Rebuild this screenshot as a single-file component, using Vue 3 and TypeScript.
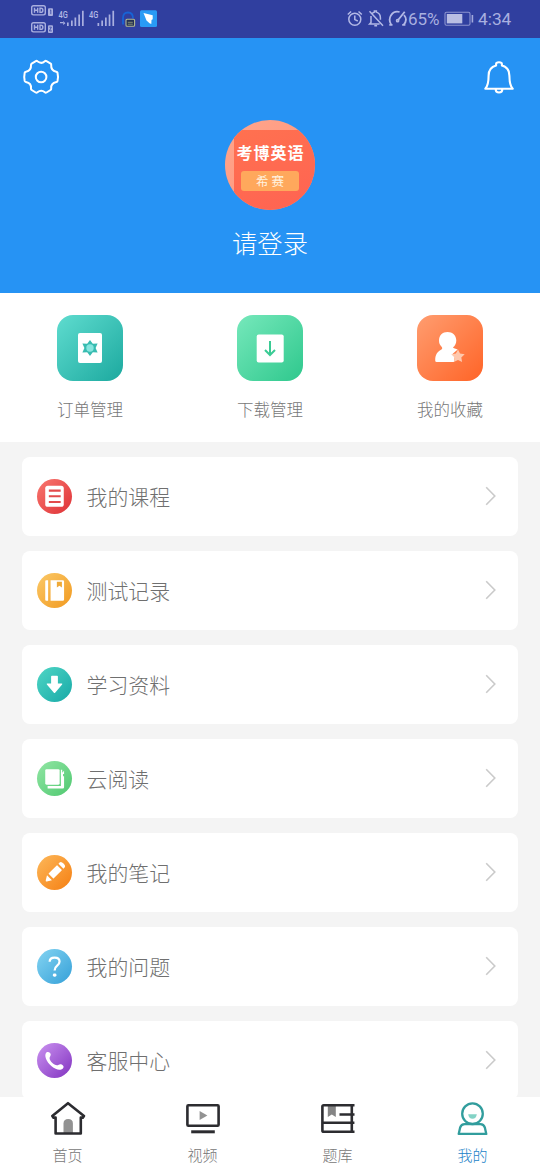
<script setup lang="ts">
type Shortcut = { id: string; label: string; from: string; to: string }
type Row = { id: string; label: string; from: string; to: string }
type Tab = { id: string; label: string; active?: boolean }

const shortcuts: Shortcut[] = [
  { id: 'order', label: '订单管理', from: '#5fdccf', to: '#1ca99f' },
  { id: 'download', label: '下载管理', from: '#76e8bb', to: '#2fc88d' },
  { id: 'favorite', label: '我的收藏', from: '#ff9d70', to: '#ff6427' },
]

const rows: Row[] = [
  { id: 'course', label: '我的课程', from: '#f9776f', to: '#de3136' },
  { id: 'test', label: '测试记录', from: '#fbc968', to: '#f1991f' },
  { id: 'material', label: '学习资料', from: '#4fd6c5', to: '#17a9a7' },
  { id: 'reading', label: '云阅读', from: '#92e6a4', to: '#4fc870' },
  { id: 'note', label: '我的笔记', from: '#fdb85a', to: '#f57f12' },
  { id: 'question', label: '我的问题', from: '#84d4f2', to: '#35a0d8' },
  { id: 'service', label: '客服中心', from: '#cb93f0', to: '#8132c0' },
]

const tabs: Tab[] = [
  { id: 'home', label: '首页' },
  { id: 'video', label: '视频' },
  { id: 'bank', label: '题库' },
  { id: 'mine', label: '我的', active: true },
]
</script>

<template>
  <div class="app">
    <div class="status">
      <svg class="status-left" width="130" height="37" viewBox="30 0 130 37" fill="none">
        <g stroke="#a9afdf" stroke-width="1.4">
          <rect x="31.7" y="5.7" width="13.6" height="9.2" rx="1.8" />
          <rect x="31.7" y="22.7" width="13.6" height="9.2" rx="1.8" />
          <path d="M34.5 7.8v5M37.7 7.8v5M34.5 10.3h3.2M40 8.2h1q1.9 0 1.9 2.1t-1.9 2.1h-1zM34.5 24.8v5M37.7 24.8v5M34.5 27.3h3.2M40 25.2h1q1.9 0 1.9 2.1t-1.9 2.1h-1z" />
        </g>
        <g fill="#a9afdf">
          <rect x="48" y="8.3" width="5" height="7.7" rx="1" />
          <rect x="48" y="25.3" width="5" height="7.7" rx="1" />
          <path d="M67 22.5h1.7V26H67zM71 20.5h1.7V26H71zM74.5 17.5h1.7V26h-1.7zM78.3 14.5H80V26h-1.7zM82 10.8h1.7V26H82zM97.5 23h1.7v3h-1.7zM101.3 20.5h1.7V26h-1.7zM105 17.5h1.7V26H105zM108.7 14.5h1.7V26h-1.7zM112.4 10.8h1.7V26h-1.7zM63.2 21v4l2.2-1.8zM60 22h3v1.2h-3z" />
        </g>
        <path d="M50 10.5l.8-.6v4.2M49.4 27.2h2l-2 3.7h2.4" stroke="#303f9f" stroke-width=".8" />
        <path d="M123 24.5v-6.3q0-5.7 5-5.7t5 5.7" stroke="#1763d6" stroke-width="1.8" />
        <rect x="126" y="19.3" width="8.6" height="7" rx="1" fill="#243052" stroke="#b4ba91" stroke-width="1.1" />
        <path d="M127.8 22.3h5M127.8 24.2h5" stroke="#9ca47b" stroke-width=".8" />
        <rect x="140" y="10.3" width="17" height="16.7" rx="1.5" fill="#299bf5" />
        <path d="M143.5 13l9.2 2.3v4l-1.2.8-.2 4-1.8-.9-3-2.6z" fill="#fff" />
        <text x="58.5" y="18" textLength="9.3" lengthAdjust="spacingAndGlyphs" class="net">4G</text>
        <text x="89" y="18" textLength="9.3" lengthAdjust="spacingAndGlyphs" class="net">4G</text>
      </svg>
      <div class="status-right">
        <svg width="62" height="24" viewBox="346 7 62 24" fill="none" stroke="#b3b9e6" stroke-width="1.5">
          <circle cx="354.8" cy="19.3" r="6" />
          <path d="M354.8 15.5v4.1l3 1.4M347.8 14.5l3.3-3M358.5 11.5l3.3 3" />
          <path d="M372.2 13.5q1-1 2.2-1.4v-1h2v1q4 1.2 4 5.6v2M371 16v6.5l-1.4 1.5h10M369.5 11.2l13.5 14.6M374.3 25.7h2.8" />
          <path d="M391.2 24.7q-3-4.6-.3-9.3 3.2-5 8.7-3.4M404 15q4.2 5-.6 10M389.3 24.9h3.2M402.2 24.9h3.2M397.7 20.5l7-8.8" stroke-width="1.8" />
          <circle cx="397.6" cy="20.7" r="1.1" />
        </svg>
        <span class="pct">65%</span>
        <svg class="battery" width="30" height="16" viewBox="0 0 30 16">
          <rect x="1" y="1.2" width="25" height="13" rx="1.5" fill="none" stroke="#8c94d0" stroke-width="1.1" />
          <rect x="2.8" y="3" width="15.5" height="9.4" fill="#b9bee3" />
          <rect x="27.6" y="4" width="1.6" height="7.5" fill="#a2a9dc" />
        </svg>
        <span class="clock">4:34</span>
      </div>
    </div>

    <header class="hero">
      <svg class="gear" width="38" height="38" viewBox="0 0 38 38" fill="none" stroke="#fff" stroke-width="2" stroke-linejoin="round">
        <path d="M13.8 3.1q.9-.5 1.6.2 4 3.1 7.4 0 .8-.7 1.7-.2l4.2 2.5q.7.5.5 1.4-.4 5.6 5 6.7 1 .2 1.3 1 1 3.7 0 8.3-.2.8-1.1 1-5.8 1.3-5.2 6.5.1 1-.7 1.5l-4 2.5q-.9.5-1.6-.2-3.7-3.1-7.5 0-.8.7-1.7.2l-4-2.5q-.8-.5-.7-1.5.6-5.3-5.1-6.5-.9-.2-1.2-1-.9-4.6 0-8.3.3-.8 1.3-1 5.4-1.1 5-6.7 0-.9.7-1.4z" />
        <circle cx="19.1" cy="19" r="5.3" />
      </svg>
      <svg class="bell" width="32" height="36" viewBox="0 0 32 36" fill="none" stroke="#fff" stroke-width="2.1" stroke-linejoin="round">
        <path d="M2.3 28.7q3.3-3.5 3.3-13 0-8.3 7.5-10.2V4q0-1.8 2.9-1.8T18.9 4v1.5q7.5 1.9 7.5 10.2 0 9.5 3.3 13zM12.7 29.5q0 3 3.3 3t3.3-3" />
      </svg>
      <div class="avatar">
        <div class="cover">
          <span class="cover-title">考博英语</span>
          <span class="cover-tag">希赛</span>
        </div>
      </div>
      <div class="login">请登录</div>
    </header>

    <section class="shortcuts">
      <div v-for="s in shortcuts" :key="s.id" class="shortcut">
        <div class="tile" :style="{ background: `linear-gradient(135deg, ${s.from}, ${s.to})` }">
          <svg width="66" height="66" viewBox="0 0 66 66">
            <g v-if="s.id === 'order'">
              <rect x="21" y="18" width="24" height="30" rx="2" fill="#fff" />
              <path d="M33 25l2.8 3.8 4.8-.3-2 4.5 2 4.5-4.8-.3L33 41l-2.8-3.8-4.8.3 2-4.5-2-4.5 4.8.3z" fill="#38bcb1" />
              <circle cx="33" cy="33" r="3.7" fill="#87e6df" />
            </g>
            <g v-else-if="s.id === 'download'">
              <rect x="19.7" y="19.5" width="27" height="28" rx="2" fill="#fff" />
              <path d="M33 26v13.5M28 35l5 5 5-5" fill="none" stroke="#3acb94" stroke-width="2" />
            </g>
            <g v-else>
              <path d="M30.5 17c5 0 8.8 3.5 8.8 8.4 0 3.2-1.5 5.4-3.2 6.9 0 1.4 3 1.4 4.6 2.2l-5 4.3 2 3.1-.8 5H19.7q-1.5 0-1.5-1.5c0-7 3-9.3 6.2-11 1-.7 1.2-1.5 0-3-1.5-1.5-2.4-3.2-2.4-6 0-4.9 3.5-8.4 8.5-8.4z" fill="#fff" />
              <path d="M41 34.5l2 4 4.7.7-3.4 3.2.8 4.7-4.1-2.2-4.2 2.2.8-4.7-3.4-3.2 4.7-.7z" fill="#ffc8ad" />
            </g>
          </svg>
        </div>
        <span class="shortcut-label">{{ s.label }}</span>
      </div>
    </section>

    <main class="list">
      <div v-for="r in rows" :key="r.id" class="row">
        <div class="badge" :style="{ background: `linear-gradient(135deg, ${r.from}, ${r.to})` }">
          <svg width="35" height="35" viewBox="0 0 34 34">
            <g v-if="r.id === 'course'">
              <rect x="8" y="6.5" width="18" height="20.5" rx="2.5" fill="#fff" />
              <path d="M11.5 11.3h11.5M11.5 16.8h11.5M11.5 22.3h11.5" stroke="#e34b4c" stroke-width="2" />
            </g>
            <g v-else-if="r.id === 'test'">
              <path d="M9 7h1.8v20H9q-1 0-1-1V8q0-1 1-1zM13.2 7H25q1.3 0 1.3 1.3v17.4q0 1.3-1.3 1.3H13.2z" fill="#fff" />
              <path d="M19.3 8.5h4.9v5.7l-2.4-1.7-2.5 1.7z" fill="#efaa38" />
            </g>
            <path v-else-if="r.id === 'material'" d="M13.7 9.3q0-.8.8-.8h5q.8 0 .8.8V16H24q1 0 .4.9l-6.8 8q-.6.6-1.2 0l-6.8-8q-.6-.9.4-.9h3.7z" fill="#fff" />
            <g v-else-if="r.id === 'reading'">
              <rect x="8" y="8" width="14" height="15" rx="1.3" fill="#fff" />
              <path d="M10.3 24.3h12.9V8.5h1.3v3l1.8-2v3.2h-1v2.2h1v10.5q0 1.3-1.3 1.3H10.3z" fill="#fff" />
            </g>
            <g v-else-if="r.id === 'note'" fill="#fff" transform="rotate(45 17 17)">
              <rect x="13.7" y="10.2" width="6.8" height="11.8" rx=".5" />
              <path d="M13.7 8.2V6.7q0-2 3.4-2t3.4 2v1.5zM13.7 24h6.8l-2.6 4.3q-.8 1.2-1.6 0z" />
            </g>
            <g v-else-if="r.id === 'question'">
              <path d="M12.3 12.5q0-4.2 4.8-4.2t4.8 3.9q0 2.2-2.3 4-2.5 2-2.5 4.7" fill="none" stroke="#fff" stroke-width="2.2" />
              <rect x="15.4" y="23.7" width="3.5" height="3.2" rx="1.4" fill="#fff" />
            </g>
            <path v-else d="M9.3 9c1.8-1 3.9.2 4 2.2 0 1.4-1.1 2.3-1.1 3.5.2 2.9 4.2 6.6 7.2 6.9 1.5 0 2.2-1.3 3.8-1 2.3.6 3.4 2.6 2 4.1-2.4 2.2-6.8 1.5-11-2C9.2 18.300 6.300 11.800 9.300 9z" fill="#fff" />
          </svg>
        </div>
        <span class="row-label">{{ r.label }}</span>
        <svg class="chevron" width="12" height="20" viewBox="0 0 12 20" fill="none" stroke="#cacaca" stroke-width="1.6">
          <path d="M1.2 1.3l8.6 8.7-8.6 8.7" />
        </svg>
      </div>
    </main>

    <nav class="tabs">
      <div v-for="t in tabs" :key="t.id" class="tab" :class="{ active: t.active }">
        <svg width="36" height="36" viewBox="0 0 36 36" fill="none" stroke="#2c2c30" stroke-width="2.6" stroke-linejoin="round">
          <g v-if="t.id === 'home'">
            <path d="M13.5 32V22.500q0-4.500 4.700-4.500t4.700 4.500V32z" fill="#929292" stroke="none" />
            <path d="M18 2.200L2.300 15l1.200 1.600H5.600V32.500H30.800V16.600h2L34 15z" />
          </g>
          <g v-else-if="t.id === 'video'">
            <rect x="2.4" y="4.2" width="31.2" height="20.6" rx="1" />
            <path d="M6.200 30.800h23.600" stroke-width="3" />
            <path d="M14.600 10v9l7.800-4.500z" fill="#929292" stroke="none" />
          </g>
          <g v-else-if="t.id === 'bank'">
            <path d="M7.800 5h8v11l-4-2.500-4 2.500z" fill="#858585" stroke="none" />
            <path d="M34.500 4.200H3.800q-1.400 0-1.400 1.400v23.800q0 1.400 1.400 1.400h30.700M31.800 4.200v26.600M2.400 21.800h32M19.500 13.500h15" />
          </g>
          <g v-else stroke="#319d9d" stroke-width="2.3">
            <circle cx="17.500" cy="12.700" r="10.300" />
            <path d="M9.700 23.200h15.600q3.500 0 4.600 3.500l1.400 6.200H3.700l1.400-6.200q1.100-3.500 4.600-3.500z" />
            <path d="M13.200 13.200h8.600q-.7 4.500-4.300 4.500t-4.300-4.500z" fill="#83d3c6" stroke="none" />
          </g>
        </svg>
        <span class="tab-label">{{ t.label }}</span>
      </div>
    </nav>
  </div>
</template>

<style>
body {
  margin: 0;
}
</style>

<style scoped>
.app {
  width: 540px;
  height: 1170px;
  display: flex;
  flex-direction: column;
  overflow: hidden;
  background: #f4f4f4;
  font-family: "Noto Sans CJK SC", sans-serif;
  font-weight: 300;
}
svg {
  display: block;
  flex: none;
}
.status {
  flex: none;
  height: 37.5px;
  padding: 0 28px 0 30px;
  display: flex;
  justify-content: space-between;
  background: #303f9f;
}
.net {
  fill: #b3b9e6;
  font: 500 9.5px Roboto, sans-serif;
}
.status-right {
  display: flex;
  align-items: center;
  color: #a9b0e0;
  font-family: Roboto, sans-serif;
  font-weight: 400;
}
.pct {
  width: 36px;
  font-size: 17px;
  white-space: nowrap;
}
.battery {
  margin-right: 4px;
}
.clock {
  width: 34px;
  font-size: 17.3px;
  white-space: nowrap;
}
.hero {
  flex: none;
  height: 255px;
  display: grid;
  grid-template-columns: 90px 1fr 90px;
  grid-template-rows: 82.5px 90px 1fr;
  background: #2693f4;
}
.gear {
  margin: 20.5px 0 0 22px;
}
.bell {
  grid-column: 3;
  margin: 22.5px 0 0 32.5px;
}
.avatar {
  grid-column: 2;
  grid-row: 2;
  justify-self: center;
  box-sizing: border-box;
  width: 90px;
  height: 90px;
  padding: 10px 0 0 9px;
  border-radius: 50%;
  overflow: hidden;
  background: linear-gradient(135deg, #ffa58b, #ff947c);
}
.cover {
  height: 80px;
  padding: 12px 9px 0 0;
  box-sizing: border-box;
  display: flex;
  flex-direction: column;
  align-items: center;
  background: linear-gradient(160deg, #ff7150, #ff6352);
  color: #fff;
}
.cover-title {
  margin-left: 1px;
  font-size: 16px;
  line-height: 20px;
  font-weight: 700;
  letter-spacing: 1px;
  white-space: nowrap;
}
.cover-tag {
  margin-top: 9px;
  width: 58px;
  height: 20px;
  border-radius: 3px;
  background: #ffa85c;
  color: #fff3e0;
  font-size: 12.5px;
  line-height: 19px;
  font-weight: 400;
  letter-spacing: 3px;
  text-indent: 3px;
  text-align: center;
}
.login {
  grid-column: 2;
  grid-row: 3;
  padding-top: 14px;
  color: #fff;
  font-size: 25.3px;
  line-height: 36px;
  text-align: center;
}
.shortcuts {
  flex: none;
  height: 149.5px;
  box-sizing: border-box;
  padding-top: 22.5px;
  display: grid;
  grid-template-columns: repeat(3, 1fr);
  background: #fff;
}
.shortcut {
  display: flex;
  flex-direction: column;
  align-items: center;
}
.tile {
  width: 66px;
  height: 66px;
  border-radius: 16px;
}
.shortcut-label {
  margin-top: 15.5px;
  font-size: 16.5px;
  line-height: 24px;
  color: #777;
}
.list {
  flex: 1;
  min-height: 0;
  overflow: hidden;
  padding: 15px 22px 0;
  display: flex;
  flex-direction: column;
  gap: 15px;
}
.row {
  flex: none;
  height: 79px;
  box-sizing: border-box;
  padding: 0 21px 1px 15px;
  display: flex;
  align-items: center;
  border-radius: 8px;
  background: #fff;
}
.badge {
  width: 35px;
  height: 35px;
  border-radius: 50%;
}
.row-label {
  flex: 1;
  margin-left: 14.5px;
  font-size: 20.9px;
  line-height: 30px;
  color: #6f6f6f;
}
.tabs {
  flex: none;
  height: 73px;
  display: grid;
  grid-template-columns: repeat(4, 1fr);
  background: #fff;
}
.tab {
  padding-top: 4px;
  display: flex;
  flex-direction: column;
  align-items: center;
}
.tab-label {
  margin-top: 7px;
  font-size: 15px;
  line-height: 22px;
  color: #777;
}
.active .tab-label {
  color: #1c82c8;
}
</style>
